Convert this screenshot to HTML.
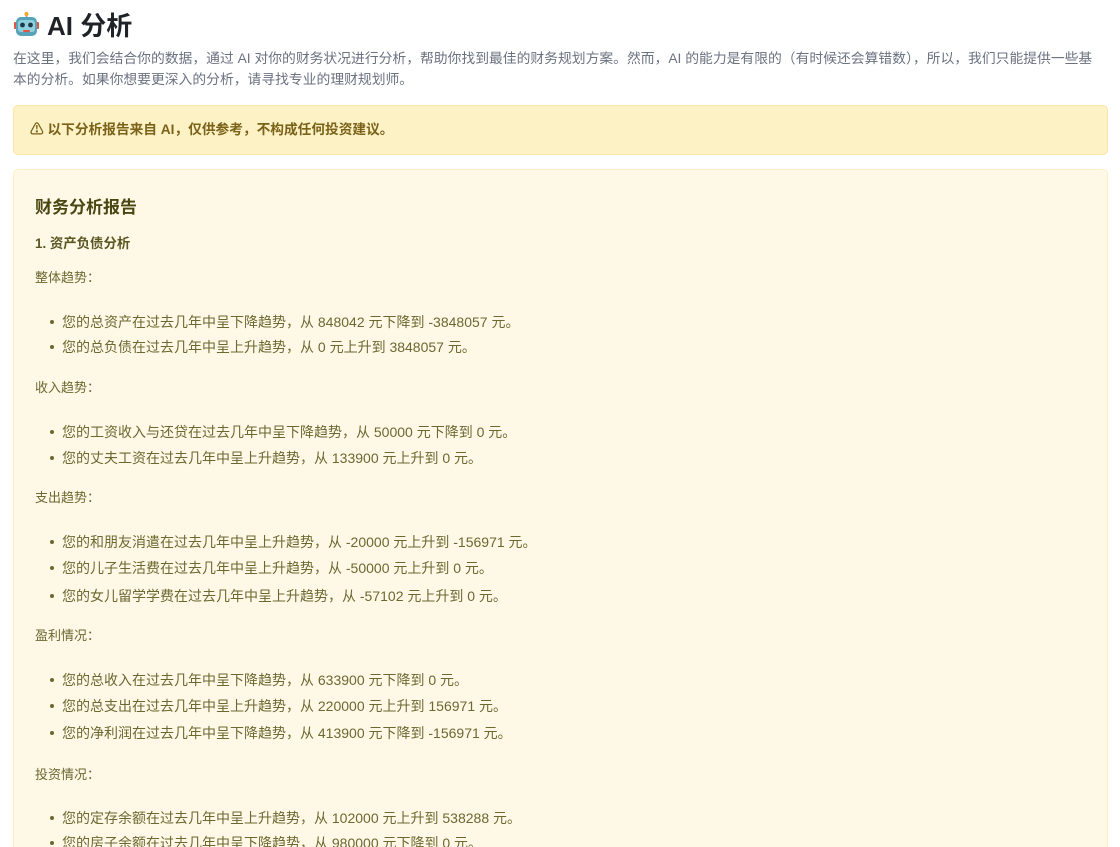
<!DOCTYPE html>
<html><head><meta charset="utf-8">
<style>
*{margin:0;padding:0;box-sizing:border-box}
html{width:1120px;height:847px;overflow:hidden}
body{width:1120px;height:847px;overflow:hidden;background:#fff;font-family:"Liberation Sans","Noto Sans CJK SC",sans-serif;position:relative}
.a{position:absolute;white-space:nowrap;line-height:20px}
h1{position:absolute;left:47px;top:8px;font-size:26px;line-height:36px;font-weight:700;color:#1f2328}
.desc{position:absolute;left:13px;top:48px;width:1098px;font-size:13.8px;line-height:21px;color:#6b7280}
.warn{position:absolute;left:13px;top:105px;width:1095px;height:50px;background:#fdf1c6;border:1px solid #fbe6a2;border-radius:5px}
.warn span{position:absolute;left:16px;top:14px;font-size:13.7px;line-height:20px;font-weight:700;color:#7a6318}
.rep{position:absolute;left:13px;top:169px;width:1095px;height:700px;background:#fef9e7;border:1px solid #fcefc3;border-radius:5px}
.h2{font-size:17px;font-weight:700;color:#4a4712;line-height:24px}
.h3{font-size:13.4px;font-weight:700;color:#5a5722}
.p{font-size:13px;color:#6b6830}
.li{font-size:14px;color:#6b6830;left:62px}
.li:before{content:"";position:absolute;left:-12px;top:8px;width:4px;height:4px;border-radius:50%;background:#6b6830}
</style></head><body>
<svg style="position:absolute;left:14px;top:12px" width="25" height="25" viewBox="0 0 25 25">
<rect x="11.5" y="1" width="2" height="4" fill="#9aa"/>
<circle cx="12.5" cy="2" r="2" fill="#f5a623"/>
<rect x="0" y="10" width="3" height="7" rx="1" fill="#e2553f"/>
<rect x="22" y="10" width="3" height="7" rx="1" fill="#e2553f"/>
<rect x="2" y="5" width="21" height="19" rx="5" fill="#58a3b8"/>
<rect x="4" y="8" width="17" height="12" rx="3" fill="#8fd0de"/>
<circle cx="8.5" cy="13" r="2.4" fill="#1c3a47"/>
<circle cx="16.5" cy="13" r="2.4" fill="#1c3a47"/>
<rect x="9" y="18" width="7" height="2" rx="1" fill="#e2553f"/>
</svg>
<h1>AI 分析</h1>
<div class="desc">在这里，我们会结合你的数据，通过 AI 对你的财务状况进行分析，帮助你找到最佳的财务规划方案。然而，AI 的能力是有限的（有时候还会算错数），所以，我们只能提供一些基<br>本的分析。如果你想要更深入的分析，请寻找专业的理财规划师。</div>
<div class="warn"><span>⚠ 以下分析报告来自 AI，仅供参考，不构成任何投资建议。</span></div>
<div class="rep"></div>
<div class="a h2" style="left:35px;top:196px">财务分析报告</div>
<div class="a h3" style="left:35px;top:234px">1. 资产负债分析</div>
<div class="a p" style="left:35px;top:268px">整体趋势：</div>
<div class="a li" style="top:312px">您的总资产在过去几年中呈下降趋势，从 848042 元下降到 -3848057 元。</div>
<div class="a li" style="top:337px">您的总负债在过去几年中呈上升趋势，从 0 元上升到 3848057 元。</div>
<div class="a p" style="left:35px;top:378px">收入趋势：</div>
<div class="a li" style="top:422px">您的工资收入与还贷在过去几年中呈下降趋势，从 50000 元下降到 0 元。</div>
<div class="a li" style="top:448px">您的丈夫工资在过去几年中呈上升趋势，从 133900 元上升到 0 元。</div>
<div class="a p" style="left:35px;top:488px">支出趋势：</div>
<div class="a li" style="top:532px">您的和朋友消遣在过去几年中呈上升趋势，从 -20000 元上升到 -156971 元。</div>
<div class="a li" style="top:558px">您的儿子生活费在过去几年中呈上升趋势，从 -50000 元上升到 0 元。</div>
<div class="a li" style="top:586px">您的女儿留学学费在过去几年中呈上升趋势，从 -57102 元上升到 0 元。</div>
<div class="a p" style="left:35px;top:626px">盈利情况：</div>
<div class="a li" style="top:670px">您的总收入在过去几年中呈下降趋势，从 633900 元下降到 0 元。</div>
<div class="a li" style="top:696px">您的总支出在过去几年中呈上升趋势，从 220000 元上升到 156971 元。</div>
<div class="a li" style="top:723px">您的净利润在过去几年中呈下降趋势，从 413900 元下降到 -156971 元。</div>
<div class="a p" style="left:35px;top:765px">投资情况：</div>
<div class="a li" style="top:808px">您的定存余额在过去几年中呈上升趋势，从 102000 元上升到 538288 元。</div>
<div class="a li" style="top:833px">您的房子余额在过去几年中呈下降趋势，从 980000 元下降到 0 元。</div>
</body></html>
